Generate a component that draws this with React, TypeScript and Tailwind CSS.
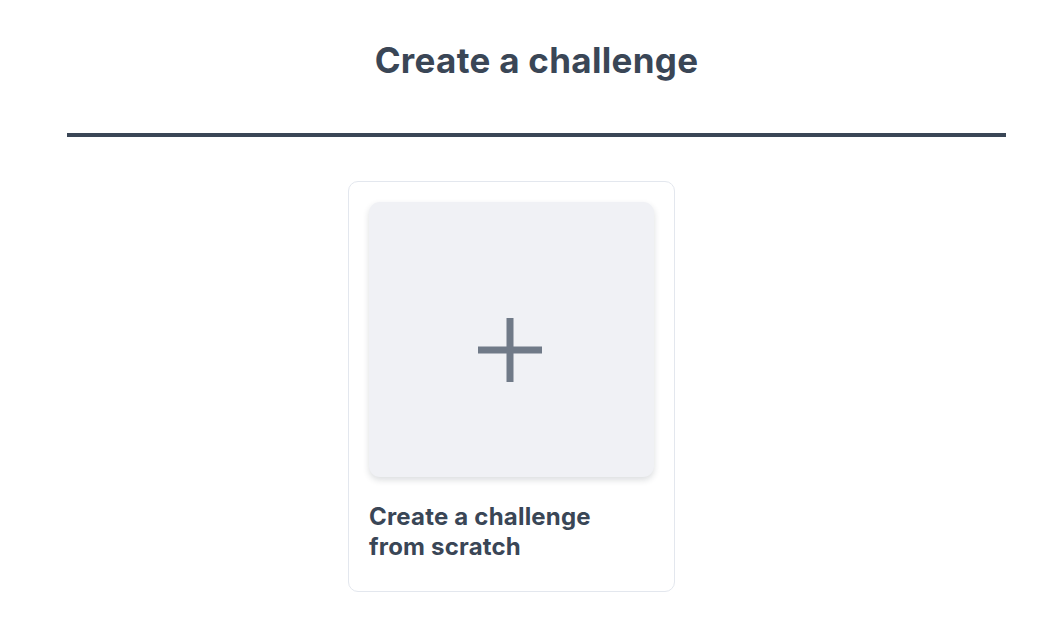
export default function App() {
  return (
    <div
      className="min-h-screen bg-white text-[#3a4656]"
      style={{ fontFamily: 'Inter, "Noto Sans", sans-serif' }}
    >
      <div className="ml-[67px] w-[939px]">
        {/* Header */}
        <div className="pt-[38px] pb-[51px] text-center">
          <h1 className="text-[35px] font-bold leading-[44px] tracking-[0.3px]">Create a challenge</h1>
        </div>
        <div className="h-[4px] bg-[#3a4656]" />

        {/* Options */}
        <div className="pt-[44px] pl-[281px]">
          <button className="flex w-[327px] h-[411px] flex-col rounded-[10px] border border-[#e3e7ee] bg-white p-[20px] text-left">
            <div className="flex h-[275px] w-[285px] items-center justify-center rounded-[11px] bg-[#f0f1f5] pt-[20px] pr-[4px] shadow-[0_3px_6px_rgba(30,41,59,0.16)]">
              <svg width="64" height="64" viewBox="0 0 64 64" className="text-[#707a88]">
                <path d="M32 0v64M0 32h64" stroke="currentColor" strokeWidth="7" />
              </svg>
            </div>
            <p className="mt-[25px] w-[260px] text-[24px] font-bold leading-[30px] tracking-[0.2px]">
              Create a challenge from scratch
            </p>
          </button>
        </div>
      </div>
    </div>
  )
}
